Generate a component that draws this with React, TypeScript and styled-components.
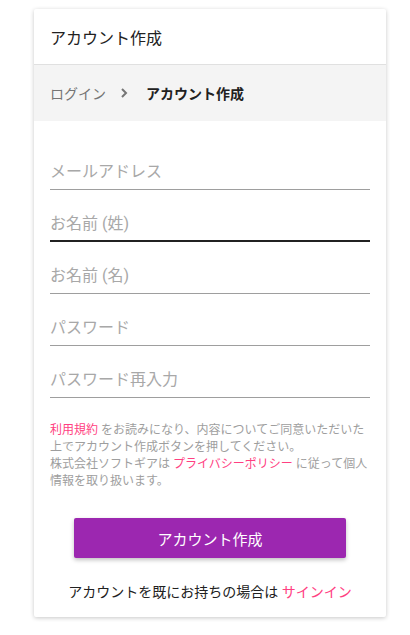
import React from 'react';
import styled, { createGlobalStyle } from 'styled-components';

const GlobalStyle = createGlobalStyle`
  body {
    margin: 0;
    background: #ffffff;
    font-family: Roboto, 'Noto Sans CJK JP', sans-serif;
    color: #212121;
  }
`;

const fields = [
  { placeholder: 'メールアドレス', type: 'email' },
  { placeholder: 'お名前 (姓)', type: 'text', focused: true },
  { placeholder: 'お名前 (名)', type: 'text' },
  { placeholder: 'パスワード', type: 'password' },
  { placeholder: 'パスワード再入力', type: 'password' },
];

const App = () => {
  return (
    <>
      <GlobalStyle />
      <Page>
        <Card>
          <Header>アカウント作成</Header>

          <Breadcrumb>
            <Crumb href='#'>ログイン</Crumb>
            <Chevron viewBox='0 0 24 24'>
              <path d='M9 6l6 6-6 6' />
            </Chevron>
            <Current>アカウント作成</Current>
          </Breadcrumb>

          <Form>
            {fields.map(f => (
              <Field key={f.placeholder}>
                <Input type={f.type} placeholder={f.placeholder} $focused={f.focused} />
              </Field>
            ))}

            <Terms>
              <Link href='#'>利用規約</Link> をお読みになり、内容についてご同意いただいた上でアカウント作成ボタンを押してください。
              <br />
              株式会社ソフトギアは <Link href='#'>プライバシーポリシー</Link> に従って個人情報を取り扱います。
            </Terms>

            <SubmitButton type='button'>アカウント作成</SubmitButton>

            <Footer>
              アカウントを既にお持ちの場合は <Link href='#'>サインイン</Link>
            </Footer>
          </Form>
        </Card>
      </Page>
    </>
  );
};

const Page = styled.div`
  padding: 9px 24px 18px 34px;
`;

const Card = styled.div`
  width: 352px;
  background: #fff;
  border-radius: 2px;
  box-shadow: 0 1px 4px rgba(0, 0, 0, 0.22);
  overflow: hidden;
`;

const Header = styled.div`
  height: 56px;
  display: flex;
  align-items: center;
  padding: 0 16px;
  border-bottom: 1px solid #e0e0e0;
  font-size: 16px;
  color: #212121;
  box-sizing: border-box;
`;

const Breadcrumb = styled.div`
  height: 56px;
  display: flex;
  align-items: center;
  padding: 0 16px;
  background: #f4f4f4;
  font-size: 14px;
`;

const Crumb = styled.a`
  color: #757575;
  text-decoration: none;
`;

const Chevron = styled.svg`
  width: 16px;
  height: 16px;
  margin: 0 14px 0 10px;
  fill: none;
  stroke: #757575;
  stroke-width: 3;
`;

const Current = styled.span`
  font-weight: 700;
  color: #212121;
`;

const Form = styled.div`
  padding: 17px 16px 15px;
  display: flex;
  flex-direction: column;
`;

const Field = styled.div`
  padding-top: 16px;
`;

const Input = styled.input<{ $focused?: boolean }>`
  display: block;
  width: 100%;
  height: 36px;
  box-sizing: border-box;
  border: none;
  border-bottom: ${p => (p.$focused ? '2px solid #212121' : '1px solid #9e9e9e')};
  padding: 0;
  outline: none;
  font-family: Roboto, 'Noto Sans CJK JP', sans-serif;
  font-size: 16px;
  color: #212121;
  background: transparent;

  &::placeholder {
    color: #a8a8a8;
  }
`;

const Terms = styled.p`
  margin: 24px 0 0;
  font-size: 12px;
  line-height: 17px;
  color: #9e9e9e;
`;

const Link = styled.a`
  display: inline-block;
  color: #ff4081;
  text-decoration: none;
`;

const SubmitButton = styled.button`
  align-self: center;
  width: 272px;
  height: 40px;
  margin-top: 28px;
  border: none;
  border-radius: 2px;
  background: #9c27b0;
  color: #fff;
  font-family: Roboto, 'Noto Sans CJK JP', sans-serif;
  font-size: 15px;
  box-shadow: 0 2px 4px rgba(0, 0, 0, 0.25);
  cursor: pointer;
`;

const Footer = styled.div`
  margin-top: 24px;
  line-height: 20px;
  text-align: center;
  font-size: 14px;
  color: #212121;
`;

export default App;
